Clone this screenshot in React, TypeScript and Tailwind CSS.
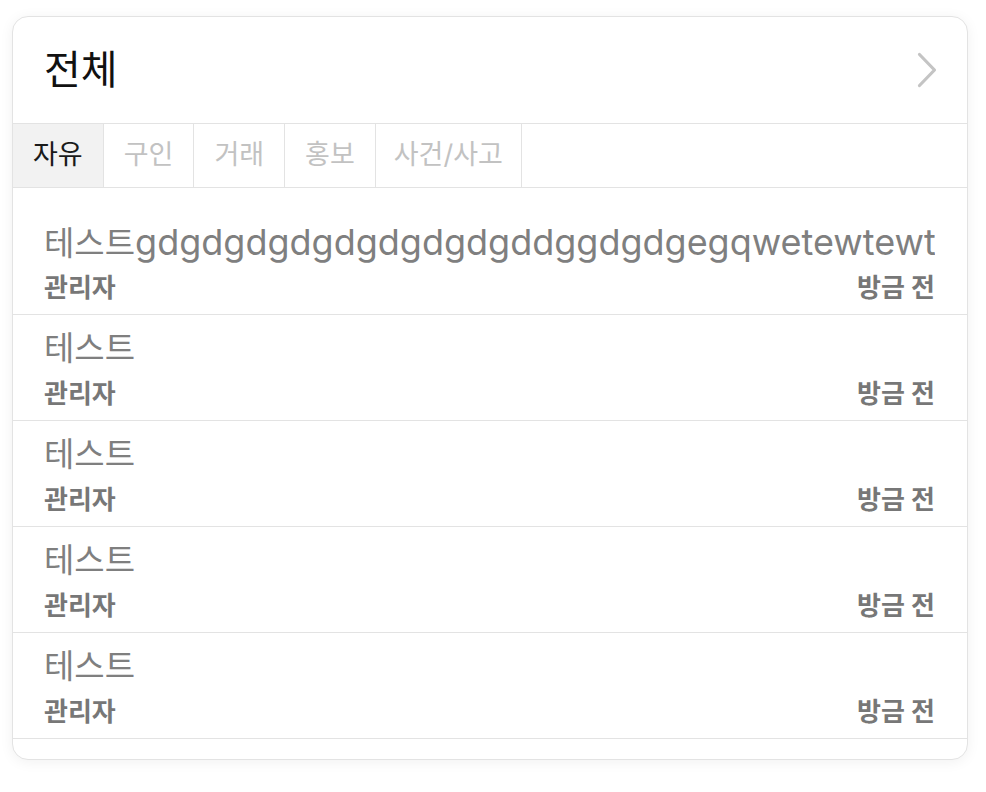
const TABS = ["자유", "구인", "거래", "홍보", "사건/사고"];

const POSTS = [
  { title: "테스트", extra: "gdgdgdgdgdgdgdgdgddggdgdgegqwetewtewt", author: "관리자", time: "방금 전" },
  { title: "테스트", extra: "", author: "관리자", time: "방금 전" },
  { title: "테스트", extra: "", author: "관리자", time: "방금 전" },
  { title: "테스트", extra: "", author: "관리자", time: "방금 전" },
  { title: "테스트", extra: "", author: "관리자", time: "방금 전" },
];

export default function App() {
  return (
    <div className="min-h-screen bg-white pt-4 pl-3 font-['Inter','Noto_Sans_CJK_KR',sans-serif]">
      <section className="w-[956px] rounded-2xl border border-[#e3e3e3] bg-white shadow-[0_2px_14px_rgba(0,0,0,0.06)] overflow-hidden">
        <header className="flex h-[107px] items-center justify-between border-b border-[#e3e3e3] pl-[31px] pr-[30px]">
          <h2 className="text-[40px] leading-none text-[#111]">전체</h2>
          <svg width="20" height="36" viewBox="0 0 20 36" fill="none">
            <path d="M2.5 2.5 L17.5 18 L2.5 33.5" stroke="#c4c4c4" strokeWidth="3.2" strokeLinecap="round" strokeLinejoin="round" />
          </svg>
        </header>

        <nav className="flex h-[64px] border-b border-[#e3e3e3]">
          {TABS.map((tab, i) => (
            <button
              key={tab}
              type="button"
              className={
                i === 0
                  ? "flex items-center border-r border-[#e3e3e3] bg-[#f2f2f2] px-5 text-[27px] text-[#1a1a1a]"
                  : i === TABS.length - 1
                    ? "flex items-center border-r border-[#e3e3e3] bg-white px-[18px] text-[27px] text-[#c2c2c2]"
                    : "flex items-center border-r border-[#e3e3e3] bg-white px-5 text-[27px] text-[#c2c2c2]"
              }
            >
              {tab}
            </button>
          ))}
        </nav>

        <ul className="pt-[21px] pb-5">
          {POSTS.map((post, i) => (
            <li key={i} className="border-b border-[#e3e3e3] pl-[31px] pr-8 pt-[11px] pb-[10px]">
              <div className="h-[44px] overflow-hidden whitespace-nowrap text-[33px] leading-[44px] text-[#7f7f7f]">
                {post.title}
                {post.extra && <span className="text-[36px]">{post.extra}</span>}
              </div>
              <div className="mt-2 flex h-8 items-center justify-between text-[26px] font-bold leading-8 text-[#777]">
                <span>{post.author}</span>
                <span>{post.time}</span>
              </div>
            </li>
          ))}
        </ul>
      </section>
    </div>
  );
}
